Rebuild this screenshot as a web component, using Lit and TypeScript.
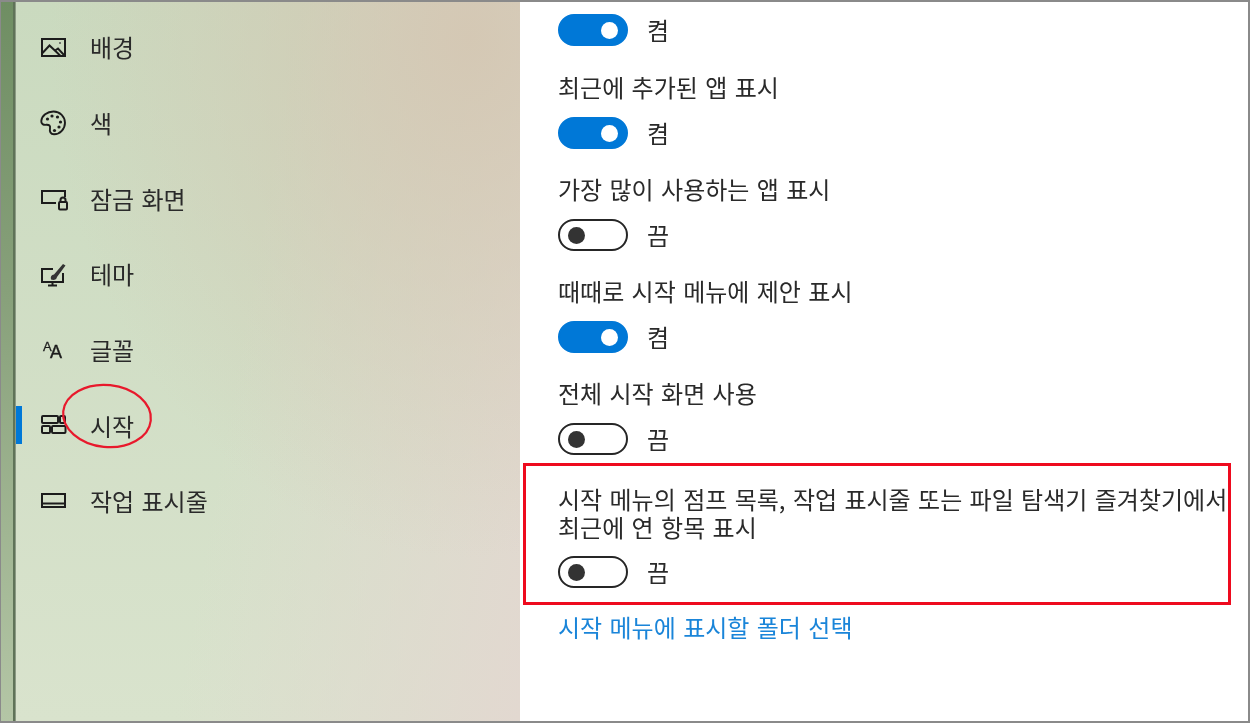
import { LitElement, html, css, svg } from "lit";
import { customElement } from "lit/decorators.js";

const icons: Record<string, unknown> = {
  bg: svg`<svg class="ic" viewBox="0 0 28 28"><g fill="none" stroke="#1c1c1c" stroke-width="2"><rect x="4" y="6" width="23" height="17"/><path d="M4.500 20 11.500 12.500 19 19.500l3.500 3.500M17 17.500l3-2 6 6.500"/></g><circle cx="22" cy="10" r="1" fill="#555"/></svg>`,
  color: svg`<svg class="ic" viewBox="0 0 28 28"><path d="M15.500 2.500C9 2.500 3.800 6.800 3.300 12c-.3 3 2 4 5 3.800 3-.2 4.200 1 3.700 3.500-.6 3 .5 6 4 6 6 0 11-5.300 11-11.500S22 2.500 15.500 2.500Z" fill="none" stroke="#1c1c1c" stroke-width="1.900"/><g fill="#1c1c1c"><circle cx="9.500" cy="10" r="1.600"/><circle cx="14" cy="7" r="1.600"/><circle cx="19.500" cy="8" r="1.600"/><circle cx="22.500" cy="13" r="1.600"/><circle cx="21" cy="18" r="1.600"/><circle cx="16.500" cy="21.500" r="1.600"/></g></svg>`,
  lock: svg`<svg class="ic" viewBox="0 0 28 28"><g fill="none" stroke="#1c1c1c" stroke-width="2"><path d="M18 19H4V7h23v6"/><rect x="21" y="18" width="8" height="7.500" rx="1"/><path d="M22.500 18v-2a2.500 2.500 0 0 1 5 0v2"/></g></svg>`,
  theme: svg`<svg class="ic" viewBox="0 0 28 28"><g fill="none" stroke="#1c1c1c" stroke-width="2"><path d="M15 9H4v13h21V13"/><path d="M14.500 22v3.500M10 25.500h9"/></g><path d="M13 19.500c-.8-3 .5-4.800 3-5L25 4l2.500 1.500L19 17c-.3 2.500-3 3.500-6 2.500Z" fill="#333"/></svg>`,
  font: svg`<svg class="ic" viewBox="0 0 28 28"><text x="5" y="15" class="a1">A</text><text x="12" y="22" class="a2">A</text></svg>`,
  start: svg`<svg class="ic" viewBox="0 0 28 28"><g fill="none" stroke="#1c1c1c" stroke-width="2"><rect x="4" y="5" width="16" height="7" rx="1"/><rect x="22" y="5" width="5" height="7" rx="1"/><rect x="4" y="15" width="8" height="7" rx="1"/><rect x="14" y="15" width="13.500" height="7" rx="1"/></g></svg>`,
  bar: svg`<svg class="ic" viewBox="0 0 28 28"><g fill="none" stroke="#1c1c1c" stroke-width="2"><rect x="4" y="7" width="23" height="13"/><path d="M4 16.500h23"/></g></svg>`,
};

const nav = [
  ["bg", "배경"],
  ["color", "색"],
  ["lock", "잠금 화면"],
  ["theme", "테마"],
  ["font", "글꼴"],
  ["start", "시작"],
  ["bar", "작업 표시줄"],
];

@customElement("app-root")
export class AppRoot extends LitElement {
  static styles = css`
    :host {
      display: block;
      width: 1250px;
      height: 723px;
      font-family: "Noto Sans CJK KR", "Noto Sans", sans-serif;
      font-size: 24px;
      word-spacing: 2px;
      color: #2a2a2a;
      overflow: hidden;
    }
    .frame {
      position: relative;
      display: flex;
      width: 1250px;
      height: 723px;
      box-sizing: border-box;
      border: solid #8a8a8a;
      border-width: 2px 2px 2px 1px;
      background: #fff;
    }
    .strip {
      width: 15px;
      flex: none;
      background: linear-gradient(90deg, transparent 0 12px, #5f7358 12px 14px, #8c9a84 14px),
        linear-gradient(180deg, #6f8e63 0%, #87a07a 40%, #b4c6a6 100%);
    }
    .side {
      width: 504px;
      flex: none;
      box-sizing: border-box;
      padding-top: 7px;
      background:
        radial-gradient(ellipse 420px 520px at 90% 5%, rgba(212, 198, 178, 0.9), rgba(212, 198, 178, 0) 100%),
        linear-gradient(100deg, rgba(226, 216, 208, 0) 45%, rgba(226, 216, 208, 1) 100%),
        linear-gradient(180deg, #cadabf 0%, #d9e3cd 100%);
    }
    .item {
      position: relative;
      display: flex;
      align-items: center;
      height: 75.7px;
      padding-left: 22px;
      gap: 24px;
      filter: blur(0.5px);
    }
    .item.active::before {
      content: "";
      position: absolute;
      left: 0;
      top: 19px;
      width: 6px;
      height: 38px;
      background: #0078d7;
    }
    .ic {
      width: 28px;
      height: 28px;
      flex: none;
      overflow: visible;
    }
    .a1 {
      font: 13px "Liberation Sans", sans-serif;
      fill: #1c1c1c;
      stroke: #1c1c1c;
      stroke-width: 0.3px;
    }
    .a2 {
      font: 18px "Liberation Sans", sans-serif;
      fill: #1c1c1c;
      stroke: #1c1c1c;
      stroke-width: 0.4px;
    }
    .ring {
      position: absolute;
      left: 59px;
      top: 379px;
      width: 94px;
      height: 70px;
      overflow: visible;
    }
    .main {
      flex: 1;
      min-width: 0;
      padding-left: 38px;
      display: flex;
      flex-direction: column;
      filter: blur(0.5px);
    }
    .label {
      height: 40px;
      line-height: 40px;
      margin-bottom: 10px;
      white-space: nowrap;
    }
    .switch {
      display: flex;
      align-items: center;
      gap: 19px;
      height: 32px;
      line-height: 32px;
    }
    .row {
      margin-bottom: 20px;
    }
    .first {
      margin-top: 12px;
      margin-bottom: 21px;
    }
    .track {
      box-sizing: border-box;
      width: 70px;
      height: 32px;
      border-radius: 16px;
      display: flex;
      align-items: center;
      padding: 0 8px;
      border: 2.5px solid #262626;
    }
    .track i {
      width: 17px;
      height: 17px;
      border-radius: 50%;
      background: #333;
    }
    .track.on {
      background: #0078d7;
      border-color: #0078d7;
      justify-content: flex-end;
    }
    .track.on i {
      background: #fff;
    }
    .box {
      margin-left: -35px;
      width: 708px;
      height: 142px;
      box-sizing: border-box;
      border: 3px solid #ee0a1e;
      padding: 19px 0 0 32px;
      margin-top: -12px;
    }
    .box .lines {
      line-height: 28px;
      margin-bottom: 15px;
      white-space: nowrap;
    }
    .link {
      color: #1a85d9;
      margin-top: 2px;
      line-height: 40px;
    }
  `;

  private sw(on: boolean) {
    return html`<div class="switch">
      <div class="track ${on ? "on" : ""}"><i></i></div>
      <span>${on ? "켬" : "끔"}</span>
    </div>`;
  }

  private row(label: string, on: boolean) {
    return html`<div class="row"><div class="label">${label}</div>${this.sw(on)}</div>`;
  }

  render() {
    return html`<div class="frame">
      <div class="strip"></div>
      <nav class="side">
        ${nav.map(
          ([k, t]) => html`<div class="item ${k === "start" ? "active" : ""}">${icons[k]}<span>${t}</span></div>`
        )}
      </nav>
      <main class="main">
        <div class="row first">${this.sw(true)}</div>
        ${this.row("최근에 추가된 앱 표시", true)}
        ${this.row("가장 많이 사용하는 앱 표시", false)}
        ${this.row("때때로 시작 메뉴에 제안 표시", true)}
        ${this.row("전체 시작 화면 사용", false)}
        <div class="box">
          <div class="lines">시작 메뉴의 점프 목록, 작업 표시줄 또는 파일 탐색기 즐겨찾기에서<br />최근에 연 항목 표시</div>
          ${this.sw(false)}
        </div>
        <div class="link">시작 메뉴에 표시할 폴더 선택</div>
      </main>
      <svg class="ring" viewBox="0 0 94 70"><ellipse cx="47" cy="35" rx="44" ry="31" transform="rotate(6 47 35)" fill="none" stroke="#e8192c" stroke-width="2.200"/></svg>
    </div>`;
  }
}
